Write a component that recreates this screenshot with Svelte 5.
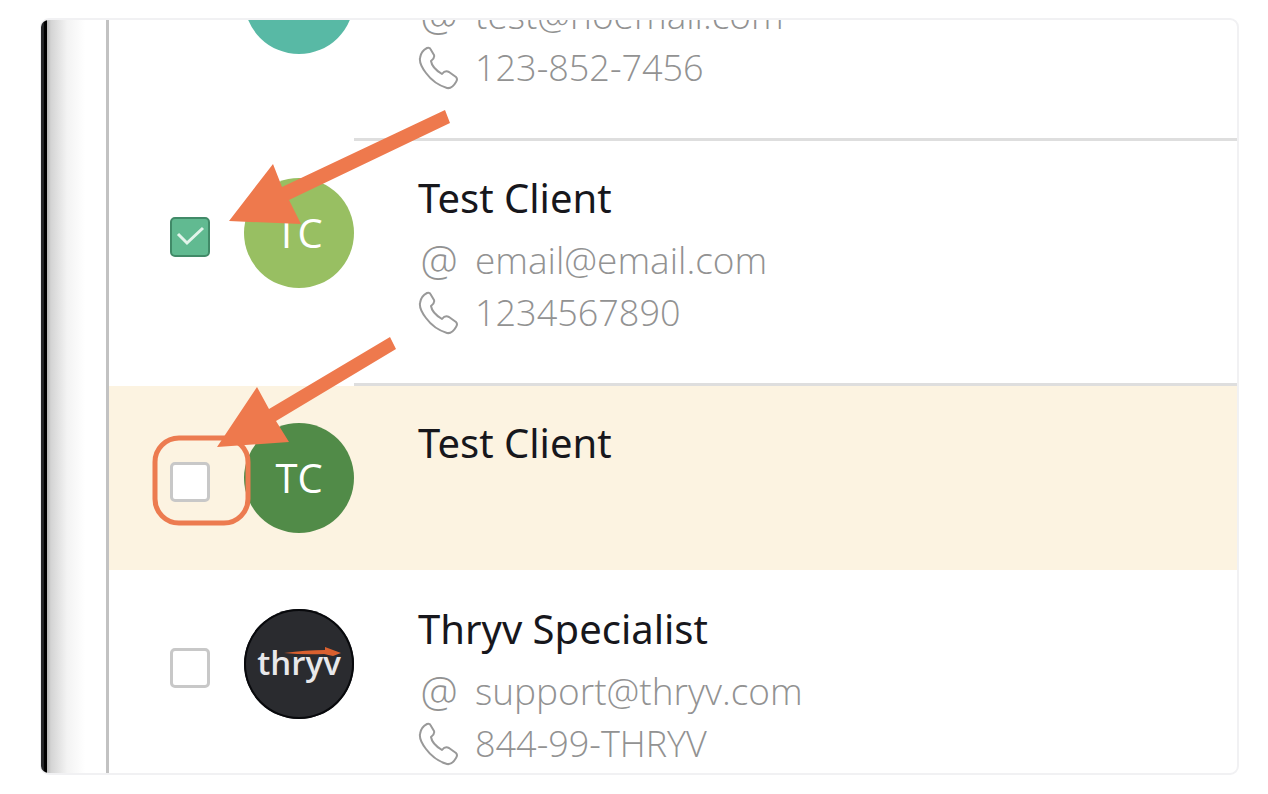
<script>
  let clients = $state([
    { initials: '', name: '', email: 'test@noemail.com', phone: '123-852-7456', color: '#58b9a5', clipped: true },
    { initials: 'TC', name: 'Test Client', email: 'email@email.com', phone: '1234567890', color: '#98bf62', checked: true },
    { initials: 'TC', name: 'Test Client', color: '#518b48', checked: false, active: true },
    { name: 'Thryv Specialist', email: 'support@thryv.com', phone: '844-99-THRYV', color: '#2a2b2f', logo: true, checked: false },
  ]);
</script>

<main class="card">
  <div class="edge"></div>

  <ul class="list">
    {#each clients as client}
      <li class="row" class:clipped={client.clipped} class:active={client.active}>
        <div class="select">
          {#if !client.clipped}
            <label class="check">
              <input type="checkbox" bind:checked={client.checked} aria-label={`Select ${client.name}`} />
              {#if client.checked}
                <svg viewBox="0 0 40 40" aria-hidden="true">
                  <path d="M8 17 L17 26 L33 11" fill="none" stroke="#e2f4eb" stroke-width="3" />
                </svg>
              {/if}
            </label>
          {/if}
        </div>

        <div class="avatar" class:dark={client.logo} style:background-color={client.color}>
          {#if client.logo}
            <svg class="logo" viewBox="0 0 110 110" role="img" aria-label="thryv">
              <text x="55" y="66" text-anchor="middle">thryv</text>
              <path d="M40 44 Q62 41 81 41 L81 38 L97 44 L89 47 L80 45 Q60 46 40 44Z" fill="#d9602f" />
            </svg>
          {:else}
            {client.initials}
          {/if}
        </div>

        <div class="info">
          {#if client.name}
            <h2>{client.name}</h2>
          {/if}
          {#if client.email}
            <p class="email">
              <span class="icon">@</span>
              <span>{client.email}</span>
            </p>
          {/if}
          {#if client.phone}
            <p>
              <svg class="icon" viewBox="0 0 42 44" aria-hidden="true">
                <path
                  d="M2 12 Q3 5 9 2 Q12 1 13 4 L16 9 Q17 12 13 15 Q14 22 24 28 Q27 24 31 26 L38 31 Q40 33 38 36 Q34 43 29 42 Q16 38 8 27 Q1 18 2 12Z"
                  fill="none"
                  stroke="#999"
                  stroke-width="2"
                  stroke-linejoin="round"
                />
              </svg>
              <span>{client.phone}</span>
            </p>
          {/if}
        </div>
      </li>
    {/each}
  </ul>

  <!-- Callout arrows and highlight ring -->
  <svg class="callouts" width="460" height="560" aria-hidden="true">
    <rect x="114" y="418" width="93" height="85" rx="24" fill="none" stroke="#ec7b50" stroke-width="5" />
    <g fill="#ee794d">
      <path d="M188 201 L232 144 L241 167 L404 90 L409 103 L248 180 L260 204Z" />
      <path d="M176 427 L216 367 L228 389 L349 317 L355 329 L235 401 L248 422Z" />
    </g>
  </svg>
</main>

<style>
  :global(body) {
    margin: 0;
    background: #fff;
  }

  .card {
    position: relative;
    display: flex;
    margin: 18px 29px 18px 40px;
    border: 2px solid #f1f1f3;
    border-left-width: 1px;
    border-radius: 9px;
    overflow: hidden;
    font-family: 'Open Sans', 'Noto Sans', sans-serif;
  }

  .edge {
    flex: 0 0 65px;
    border-right: 3px solid #c2c2c2;
    background: linear-gradient(to right, #242527 0 3px, #000 3px 6px, #b5b5b5 6px, #d4d4d4 10px, #f3f3f3 26px, #fff 44px);
  }

  .list {
    flex: 1;
    min-width: 0;
    margin: 0;
    padding: 0;
    list-style: none;
  }

  .row {
    display: flex;
  }

  .select {
    flex: 0 0 135px;
    box-sizing: border-box;
    padding: 76px 0 0 61px;
  }

  .check {
    display: grid;
    width: 40px;
    height: 40px;
  }

  .check input,
  .check svg {
    grid-area: 1 / 1;
    width: 40px;
    height: 40px;
  }

  .check svg {
    pointer-events: none;
  }

  input {
    appearance: none;
    box-sizing: border-box;
    margin: 0;
    border: 3px solid #c8c8c8;
    border-radius: 5px;
    background: #fff;
    cursor: pointer;
  }

  input:checked {
    border: 2px solid #418a68;
    background: #61ba91;
  }

  .avatar {
    display: flex;
    align-items: center;
    justify-content: center;
    flex: 0 0 110px;
    height: 110px;
    margin-top: 37px;
    border-radius: 50%;
    color: #fff;
    font-size: 40px;
    line-height: 108px;
  }

  .avatar.dark {
    box-shadow: inset 0 0 0 2px #08090c;
  }

  .logo {
    width: 110px;
    height: 110px;
  }

  .logo text {
    fill: #e8e8ea;
    font-size: 33px;
    font-weight: 600;
  }

  .info {
    flex: 1;
    min-width: 0;
    box-sizing: border-box;
    min-height: 184px;
    padding: 30px 0 44px 64px;
    border-bottom: 3px solid #dedede;
  }

  h2 {
    margin: 0 0 9px;
    color: #17171c;
    font-size: 40px;
    font-weight: 400;
    line-height: 53px;
    font-family: 'Noto Sans', 'Open Sans', sans-serif;
  }

  p {
    display: flex;
    align-items: center;
    gap: 15px;
    margin: 0;
    color: #929292;
    font-size: 36px;
    font-weight: 300;
    line-height: 53px;
  }

  .email {
    font-size: 37px;
  }

  .icon {
    flex: 0 0 42px;
    height: 44px;
    font-size: 42px;
    line-height: 44px;
    text-align: center;
  }

  .clipped .avatar {
    margin-top: -76px;
  }

  .clipped .info {
    min-height: 0;
    margin-top: -32px;
    padding-top: 0;
  }

  .active {
    background: #fcf3e1;
  }

  .active .info,
  .row:last-child .info {
    border-bottom: 0;
  }

  .row:last-child {
    padding-top: 2px;
  }

  .row:last-child .info {
    padding-bottom: 3px;
  }

  .callouts {
    position: absolute;
    top: 0;
    left: 0;
    pointer-events: none;
  }
</style>
